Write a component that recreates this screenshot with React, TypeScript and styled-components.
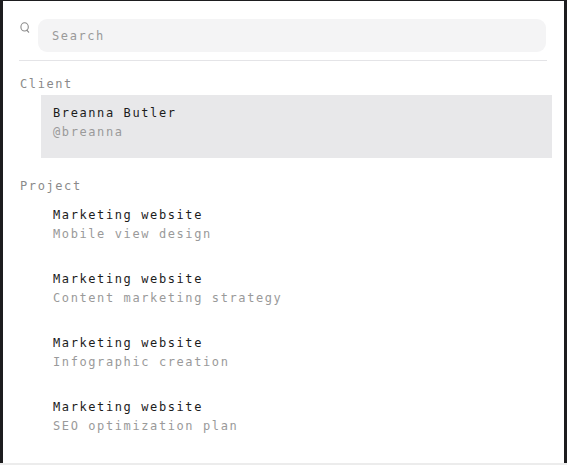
import React from "react";
import styled, { createGlobalStyle } from "styled-components";

const GlobalStyle = createGlobalStyle`
  html, body {
    margin: 0;
    padding: 0;
    background: #1d1d1f;
  }
  body {
    font-family: "DejaVu Sans Mono", "Liberation Mono", monospace;
    -webkit-font-smoothing: antialiased;
  }
  * { box-sizing: border-box; }
`;

const Frame = styled.div`
  width: 567px;
  height: 465px;
  display: flex;
  flex-direction: column;
  padding: 1px 3px 0 3px;
`;

const Panel = styled.div`
  flex: 1;
  background: #ffffff;
  display: flex;
  flex-direction: column;
  overflow: hidden;
`;

const BottomStrip = styled.div`
  height: 2px;
  margin: 0 -3px;
  background: #ececec;
`;

const Header = styled.div`
  display: flex;
  align-items: flex-start;
  gap: 8px;
  padding: 18px 18px 0 17px;
`;

const IconWrap = styled.span`
  display: flex;
  width: 10px;
  height: 11px;
  margin-top: 3px;
  color: #8a8a8a;
`;

const SearchInput = styled.input`
  flex: 1;
  height: 33px;
  border: none;
  outline: none;
  border-radius: 9px;
  background: #f4f4f5;
  padding: 1px 14px 0;
  font-family: inherit;
  font-size: 12px;
  letter-spacing: 1.6px;
  color: #1c1c1c;
  &::placeholder {
    color: #9a9a9a;
  }
`;

const Divider = styled.div`
  height: 1px;
  margin: 8px 17px 0 16px;
  background: #e4e4e7;
`;

const Groups = styled.div`
  display: flex;
  flex-direction: column;
  gap: 5px;
`;

const Group = styled.section`
  display: flex;
  flex-direction: column;
  padding: 13px 12px 0 17px;
`;

const GroupLabel = styled.div`
  height: 20px;
  line-height: 20px;
  font-size: 12px;
  letter-spacing: 1.6px;
  color: #8a8a8a;
`;

const ItemList = styled.div`
  display: flex;
  flex-direction: column;
  gap: 1px;
  margin-top: 1px;
`;

const Item = styled.div<{ $selected?: boolean }>`
  height: 63px;
  margin-left: 21px;
  padding: 9px 12px 0;
  background: ${(p) => (p.$selected ? "#e8e8ea" : "transparent")};
  display: flex;
  flex-direction: column;
  font-size: 12px;
  letter-spacing: 1.6px;
`;

const Title = styled.div`
  line-height: 19px;
  color: #1c1c1c;
`;

const Sub = styled.div`
  line-height: 19px;
  color: #9a9a9a;
`;

const SearchIcon = () => (
  <svg width="10" height="11" viewBox="0 0 10 11" fill="none">
    <ellipse cx="4.6" cy="4.9" rx="3.7" ry="4.1" stroke="currentColor" strokeWidth="1.1" />
    <path d="M6.8 8.2 L8.6 10.2" stroke="currentColor" strokeWidth="1.2" strokeLinecap="round" />
  </svg>
);

const projects = [
  "Mobile view design",
  "Content marketing strategy",
  "Infographic creation",
  "SEO optimization plan",
];

export default function App() {
  return (
    <>
      <GlobalStyle />
      <Frame>
        <Panel>
          <Header>
            <IconWrap>
              <SearchIcon />
            </IconWrap>
            <SearchInput placeholder="Search" />
          </Header>
          <Divider />
          <Groups>
            <Group>
              <GroupLabel>Client</GroupLabel>
              <ItemList>
                <Item $selected>
                  <Title>Breanna Butler</Title>
                  <Sub>@breanna</Sub>
                </Item>
              </ItemList>
            </Group>
            <Group>
              <GroupLabel>Project</GroupLabel>
              <ItemList>
                {projects.map((p) => (
                  <Item key={p}>
                    <Title>Marketing website</Title>
                    <Sub>{p}</Sub>
                  </Item>
                ))}
              </ItemList>
            </Group>
          </Groups>
        </Panel>
        <BottomStrip />
      </Frame>
    </>
  );
}
